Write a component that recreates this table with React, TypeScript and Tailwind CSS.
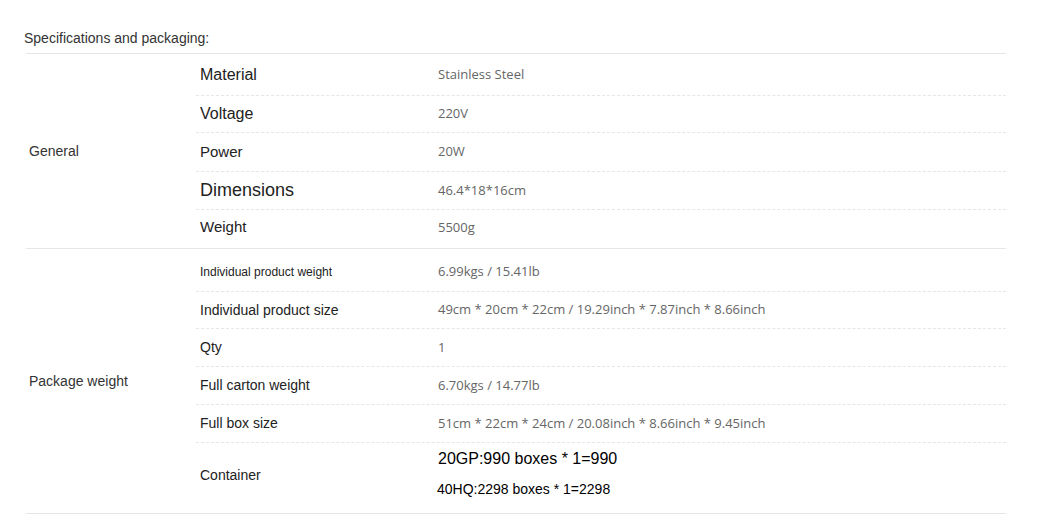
import React from "react";

const arial = { fontFamily: '"Liberation Sans", Arial, sans-serif' };
const open = { fontFamily: '"Open Sans", sans-serif' };

type Row = { label: string; lcls: string; value: React.ReactNode; h: string; pad?: string };

const general: Row[] = [
  { label: "Material", lcls: "text-[16px]", value: "Stainless Steel", h: "h-[42px]", pad: "pt-[1px]" },
  { label: "Voltage", lcls: "text-[16px]", value: "220V", h: "h-[37px]" },
  { label: "Power", lcls: "text-[15px]", value: "20W", h: "h-[39px]" },
  { label: "Dimensions", lcls: "text-[18px]", value: "46.4*18*16cm", h: "h-[38px]" },
  { label: "Weight", lcls: "text-[15px]", value: "5500g", h: "h-[38px]", pad: "pb-[3px]" },
];

const pack: Row[] = [
  { label: "Individual product weight", lcls: "text-[12px]", value: "6.99kgs / 15.41lb", h: "h-[43px]", pad: "pt-[3px]" },
  {
    label: "Individual product size",
    lcls: "text-[14px]",
    value: "49cm * 20cm * 22cm / 19.29inch * 7.87inch * 8.66inch",
    h: "h-[37px]",
  },
  { label: "Qty", lcls: "text-[14px]", value: "1", h: "h-[38px]" },
  { label: "Full carton weight", lcls: "text-[14px]", value: "6.70kgs / 14.77lb", h: "h-[38px]" },
  {
    label: "Full box size",
    lcls: "text-[14px]",
    value: "51cm * 22cm * 24cm / 20.08inch * 8.66inch * 9.45inch",
    h: "h-[38px]",
  },
  {
    label: "Container",
    lcls: "text-[14px] -mt-[6px]",
    value: (
      <div className="flex flex-col text-black -mt-[10px]" style={arial}>
        <span className="text-[16px] leading-[20px]">20GP:990 boxes * 1=990</span>
        <span className="text-[14px] leading-[18px] mt-[11px] -ml-[1px]">40HQ:2298 boxes * 1=2298</span>
      </div>
    ),
    h: "h-[70px]",
  },
];

function Section({ title, rows }: { title: string; rows: Row[] }) {
  return (
    <div className="flex border-b border-[#e6e6e6]">
      <div className="w-[170px] flex items-center pl-[3px] text-[14px] text-[#333]" style={arial}>
        {title}
      </div>
      <div className="flex-1 flex flex-col">
        {rows.map((r, i) => (
          <div
            key={r.label}
            className={`flex items-center ${r.h} ${r.pad ?? ""} ${
              i < rows.length - 1 ? "border-b border-dashed border-[#e6e6e6]" : ""
            }`}
          >
            <div className={`w-[242px] pl-[4px] text-[#222] ${r.lcls}`} style={arial}>
              {r.label}
            </div>
            <div className="text-[13px] text-[#666]" style={open}>
              {r.value}
            </div>
          </div>
        ))}
      </div>
    </div>
  );
}

export default function App() {
  return (
    <div className="w-[1058px] h-[522px] bg-white">
      <div className="pt-[29px] pl-[24px] text-[14px] leading-[18px] text-[#333] mb-[6px]" style={arial}>
        Specifications and packaging:
      </div>
      <div className="ml-[26px] w-[980px] border-t border-[#e6e6e6]">
        <Section title="General" rows={general} />
        <Section title="Package weight" rows={pack} />
      </div>
    </div>
  );
}
